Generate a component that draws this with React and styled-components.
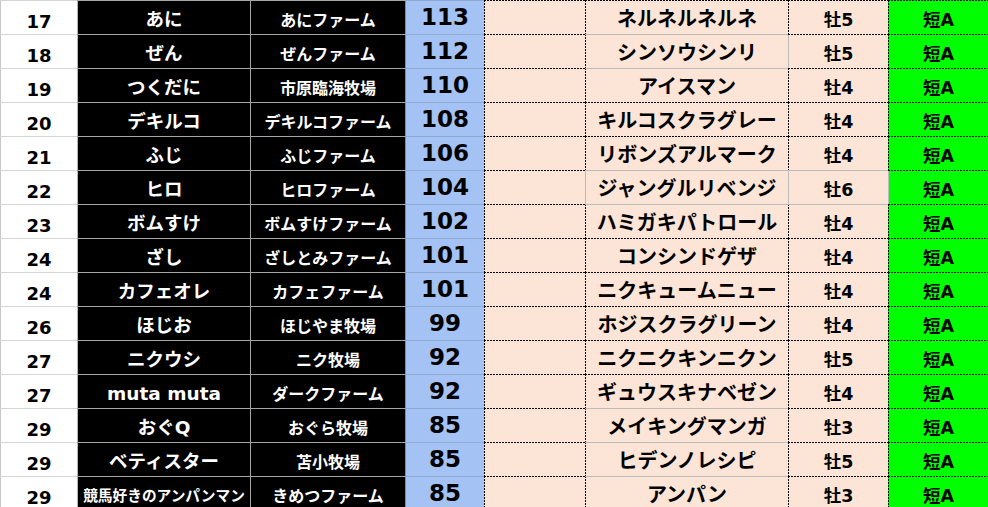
import styled, { createGlobalStyle } from "styled-components";

const GlobalStyle = createGlobalStyle`
  body {
    margin: 0;
    background: #ffffff;
    overflow: hidden;
  }
`;

const DASH = "dash";
const GRID = "#bcbcbc";

// one edge of a cell, drawn as a 1px background strip
const edge = (kind, dir) =>
  kind === DASH
    ? `repeating-linear-gradient(${dir}, #000 0 2px, transparent 2px 3px)`
    : `linear-gradient(${kind}, ${kind})`;

const Sheet = styled.div`
  display: grid;
  grid-template-columns: 77px 173px 155px 79px 101px 203px 100px 100px;
  grid-auto-rows: 34px;
  width: 988px;
  font-family: "DejaVu Sans", "Noto Sans CJK JP", sans-serif;
  font-weight: bold;
`;

const Cell = styled.div`
  box-sizing: border-box;
  display: flex;
  align-items: center;
  justify-content: center;
  padding: ${(p) => (p.$pt || 0) + 1}px 0 0 1px;
  line-height: 1;
  white-space: nowrap;
  overflow: hidden;
  background-color: ${(p) => p.$bg};
  background-image: ${(p) => `${edge(p.$top, "to right")}, ${edge(p.$left, "to bottom")}`};
  background-size: 100% 1px, 1px 100%;
  background-position: top left, top left;
  background-repeat: no-repeat;
`;

const RankCell = styled(Cell).attrs({ $bg: "#ffffff", $top: "#d4d4d4", $left: "#c8c8c8", $pt: 9 })`
  color: #000;
  font-size: 18px;
`;

const OwnerCell = styled(Cell).attrs({ $bg: "#000000", $top: "#a6a6a6", $left: "#b4b4b4", $pt: 5 })`
  color: #fff;
  font-size: ${(p) => (p.$small ? "14.7px" : "18.5px")};
`;

const FarmCell = styled(Cell).attrs({ $bg: "#000000", $top: "#a6a6a6", $left: "#a6a6a6", $pt: 6 })`
  color: #fff;
  font-size: 16px;
`;

const PointCell = styled(Cell).attrs({ $bg: "#a4c2f4", $top: "#90a8d4", $left: "#8c8c8c", $pt: 0 })`
  color: #000;
  font-size: 23px;
`;

const BlankCell = styled(Cell).attrs({ $bg: "#fce4d6", $top: DASH, $left: DASH })``;

const HorseCell = styled(Cell).attrs((p) => ({
  $bg: "#fce4d6",
  $top: p.$top || DASH,
  $left: p.$left || DASH,
  $pt: 2,
}))`
  color: #000;
  font-size: 20px;
`;

const SexCell = styled(Cell).attrs((p) => ({
  $bg: "#fce4d6",
  $top: p.$top || DASH,
  $left: p.$left || DASH,
  $pt: 7,
}))`
  color: #000;
  font-size: 17.5px;
`;

const GradeCell = styled(Cell).attrs((p) => ({
  $bg: "#00ff00",
  $top: DASH,
  $left: p.$left || DASH,
  $pt: 6,
}))`
  color: #000;
  font-size: 17.5px;
`;

const rows = [
  ["17", "あに", "あにファーム", "113", "ネルネルネルネ", "牡5"],
  ["18", "ぜん", "ぜんファーム", "112", "シンソウシンリ", "牡5"],
  ["19", "つくだに", "市原臨海牧場", "110", "アイスマン", "牡4"],
  ["20", "デキルコ", "デキルコファーム", "108", "キルコスクラグレー", "牡4"],
  ["21", "ふじ", "ふじファーム", "106", "リボンズアルマーク", "牡4"],
  ["22", "ヒロ", "ヒロファーム", "104", "ジャングルリベンジ", "牡6"],
  ["23", "ボムすけ", "ボムすけファーム", "102", "ハミガキパトロール", "牡4"],
  ["24", "ざし", "ざしとみファーム", "101", "コンシンドゲザ", "牡4"],
  ["24", "カフェオレ", "カフェファーム", "101", "ニクキュームニュー", "牡4"],
  ["26", "ほじお", "ほじやま牧場", "99", "ホジスクラグリーン", "牡4"],
  ["27", "ニクウシ", "ニク牧場", "92", "ニクニクキンニクン", "牡5"],
  ["27", "muta muta", "ダークファーム", "92", "ギュウスキナベゼン", "牡4"],
  ["29", "おぐQ", "おぐら牧場", "85", "メイキングマンガ", "牡3"],
  ["29", "ベティスター", "苫小牧場", "85", "ヒデンノレシピ", "牡5"],
  ["29", "競馬好きのアンパンマン", "きめつファーム", "85", "アンパン", "牡3", true],
];

// cells where the sheet shows plain gridlines instead of dotted borders
const plain = {
  1: { horseTop: GRID, sexLeft: GRID },
  2: { horseTop: GRID },
  5: { horseTop: GRID, horseLeft: GRID, sexTop: GRID, sexLeft: GRID, gradeLeft: GRID },
  6: { horseTop: GRID, sexTop: GRID },
  12: { horseTop: GRID },
  13: { horseTop: GRID },
  14: { horseTop: GRID },
};

const App = () => {
  return (
    <>
      <GlobalStyle />
      <Sheet>
        {rows.map(([rank, owner, farm, point, horse, sex, longName], i) => {
          const g = plain[i] || {};
          return [
            <RankCell key={`r${i}`}>{rank}</RankCell>,
            <OwnerCell key={`o${i}`} $small={longName}>
              {owner}
            </OwnerCell>,
            <FarmCell key={`f${i}`}>{farm}</FarmCell>,
            <PointCell key={`p${i}`}>{point}</PointCell>,
            <BlankCell key={`b${i}`} />,
            <HorseCell key={`h${i}`} $top={g.horseTop} $left={g.horseLeft}>
              {horse}
            </HorseCell>,
            <SexCell key={`s${i}`} $top={g.sexTop} $left={g.sexLeft}>
              {sex}
            </SexCell>,
            <GradeCell key={`g${i}`} $left={g.gradeLeft}>
              短A
            </GradeCell>,
          ];
        })}
      </Sheet>
    </>
  );
};

export default App;
